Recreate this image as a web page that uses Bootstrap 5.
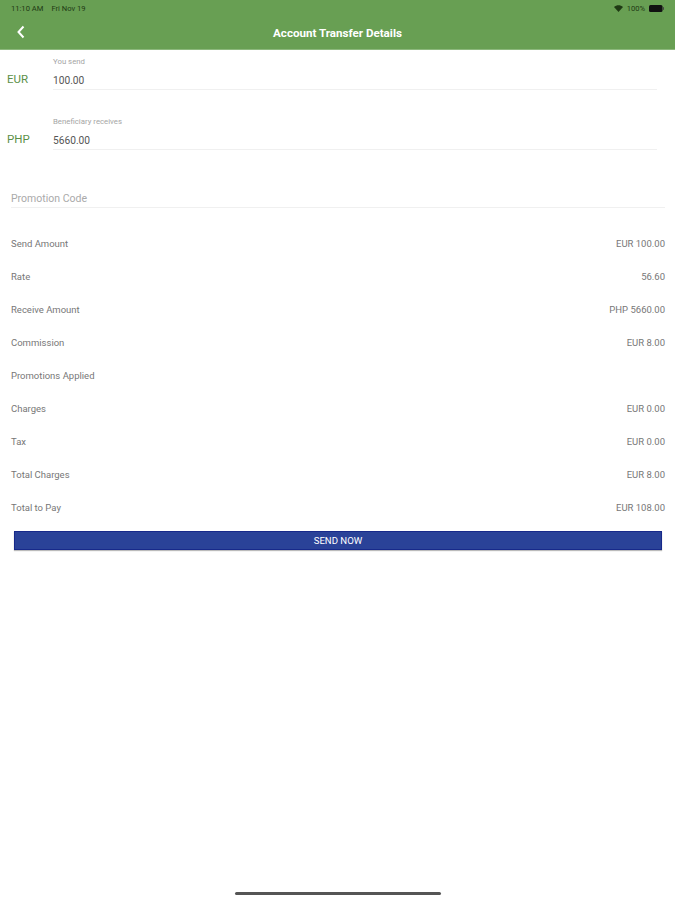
<!DOCTYPE html>
<html lang="en">
<head>
<meta charset="utf-8">
<title>Account Transfer Details</title>
<link href="https://cdn.jsdelivr.net/npm/bootstrap@5.3.0/dist/css/bootstrap.min.css" rel="stylesheet">
<style>
html,body{height:900px;overflow:hidden;background:#fff}
body{font-family:Roboto,"Liberation Sans",sans-serif;color:#555;position:relative}
.app-head{height:50px;background:#689f53;border-bottom:1px solid #8cb87c}
.status-bar{height:17px;padding:0 11px;font-size:7.6px;color:#1f3a14;line-height:17px}
.title-row{height:32px;position:relative;padding-left:16px}
.back-icon{width:10px;height:14px;margin-bottom:2px}
.head-title{font-size:11.6px;font-weight:700;color:#fff}
.title-wrap{position:absolute;left:0;right:0;top:0;height:100%;padding-top:2px}
.amount-row{height:60px;padding-left:7px;padding-right:18px}
.cur-code{width:46px;color:#5c9148;font-size:11.5px;line-height:14px;padding-top:22px;flex:none}
.amount-box{border-bottom:1px solid #f0f0f0;height:40px;padding-top:7px}
.amount-label{font-size:7.8px;color:#a5a5a5;line-height:10px}
.amount-val{font-size:10.2px;color:#555;line-height:14px;margin-top:7px}
.promo-box{margin:12px 10px 0 11px;height:26px;border-bottom:1px solid #f0f0f0;font-size:10.5px;color:#aaa;line-height:14px;padding-top:10px}
.detail-list{padding:19px 10px 0 11px}
.detail-line{height:33px;font-size:9.5px;line-height:33px;color:#777}
.send-btn{display:block;margin:7px 13px 0 14px;width:648px;height:19px;background:#2a4298;border:1px solid #17298a;border-radius:0;color:#fff;font-size:9.6px;line-height:17px;padding:0;box-shadow:0 1px 1px #bbb}
.send-btn:hover{background:#2a4298;color:#fff}
.home-bar{position:absolute;left:235px;top:892px;width:206px;height:3px;background:#555;border-radius:2px}
</style>
</head>
<body>
<header class="app-head">
  <div class="status-bar d-flex justify-content-between">
    <span class="d-flex gap-2"><span>11:10 AM</span><span>Fri Nov 19</span></span>
    <span class="d-flex align-items-center gap-1">
      <svg width="9" height="7" viewBox="0 0 9 7"><path d="M0 2 C2.5 -.4 6.5 -.4 9 2 L4.5 7Z" fill="#1f3a14"/></svg>
      <span>100%</span>
      <svg width="15" height="7" viewBox="0 0 15 7"><rect width="13.5" height="7" rx="1.5" fill="#111"/><rect x="13.8" y="2.2" width="1.2" height="2.6" fill="#444"/></svg>
    </span>
  </div>
  <div class="title-row d-flex align-items-center">
    <div class="title-wrap d-flex align-items-center justify-content-center"><span class="head-title">Account Transfer Details</span></div>
    <svg class="back-icon" viewBox="0 0 10 14"><path d="M7.5 1.5 L2.5 7 L7.5 12.5" fill="none" stroke="#fff" stroke-width="2"/></svg>
  </div>
</header>
<main>
  <div class="amount-row d-flex">
    <div class="cur-code">EUR</div>
    <div class="amount-box flex-grow-1">
      <div class="amount-label">You send</div>
      <div class="amount-val">100.00</div>
    </div>
  </div>
  <div class="amount-row d-flex">
    <div class="cur-code">PHP</div>
    <div class="amount-box flex-grow-1">
      <div class="amount-label">Beneficiary receives</div>
      <div class="amount-val">5660.00</div>
    </div>
  </div>
  <div class="promo-box">Promotion Code</div>
  <div class="detail-list">
    <div class="detail-line d-flex justify-content-between"><span>Send Amount</span><span>EUR 100.00</span></div>
    <div class="detail-line d-flex justify-content-between"><span>Rate</span><span>56.60</span></div>
    <div class="detail-line d-flex justify-content-between"><span>Receive Amount</span><span>PHP 5660.00</span></div>
    <div class="detail-line d-flex justify-content-between"><span>Commission</span><span>EUR 8.00</span></div>
    <div class="detail-line d-flex justify-content-between"><span>Promotions Applied</span><span></span></div>
    <div class="detail-line d-flex justify-content-between"><span>Charges</span><span>EUR 0.00</span></div>
    <div class="detail-line d-flex justify-content-between"><span>Tax</span><span>EUR 0.00</span></div>
    <div class="detail-line d-flex justify-content-between"><span>Total Charges</span><span>EUR 8.00</span></div>
    <div class="detail-line d-flex justify-content-between"><span>Total to Pay</span><span>EUR 108.00</span></div>
  </div>
  <button type="button" class="btn send-btn">SEND NOW</button>
</main>
<div class="home-bar"></div>
<script src="https://cdn.jsdelivr.net/npm/bootstrap@5.3.0/dist/js/bootstrap.bundle.min.js"></script>
</body>
</html>
